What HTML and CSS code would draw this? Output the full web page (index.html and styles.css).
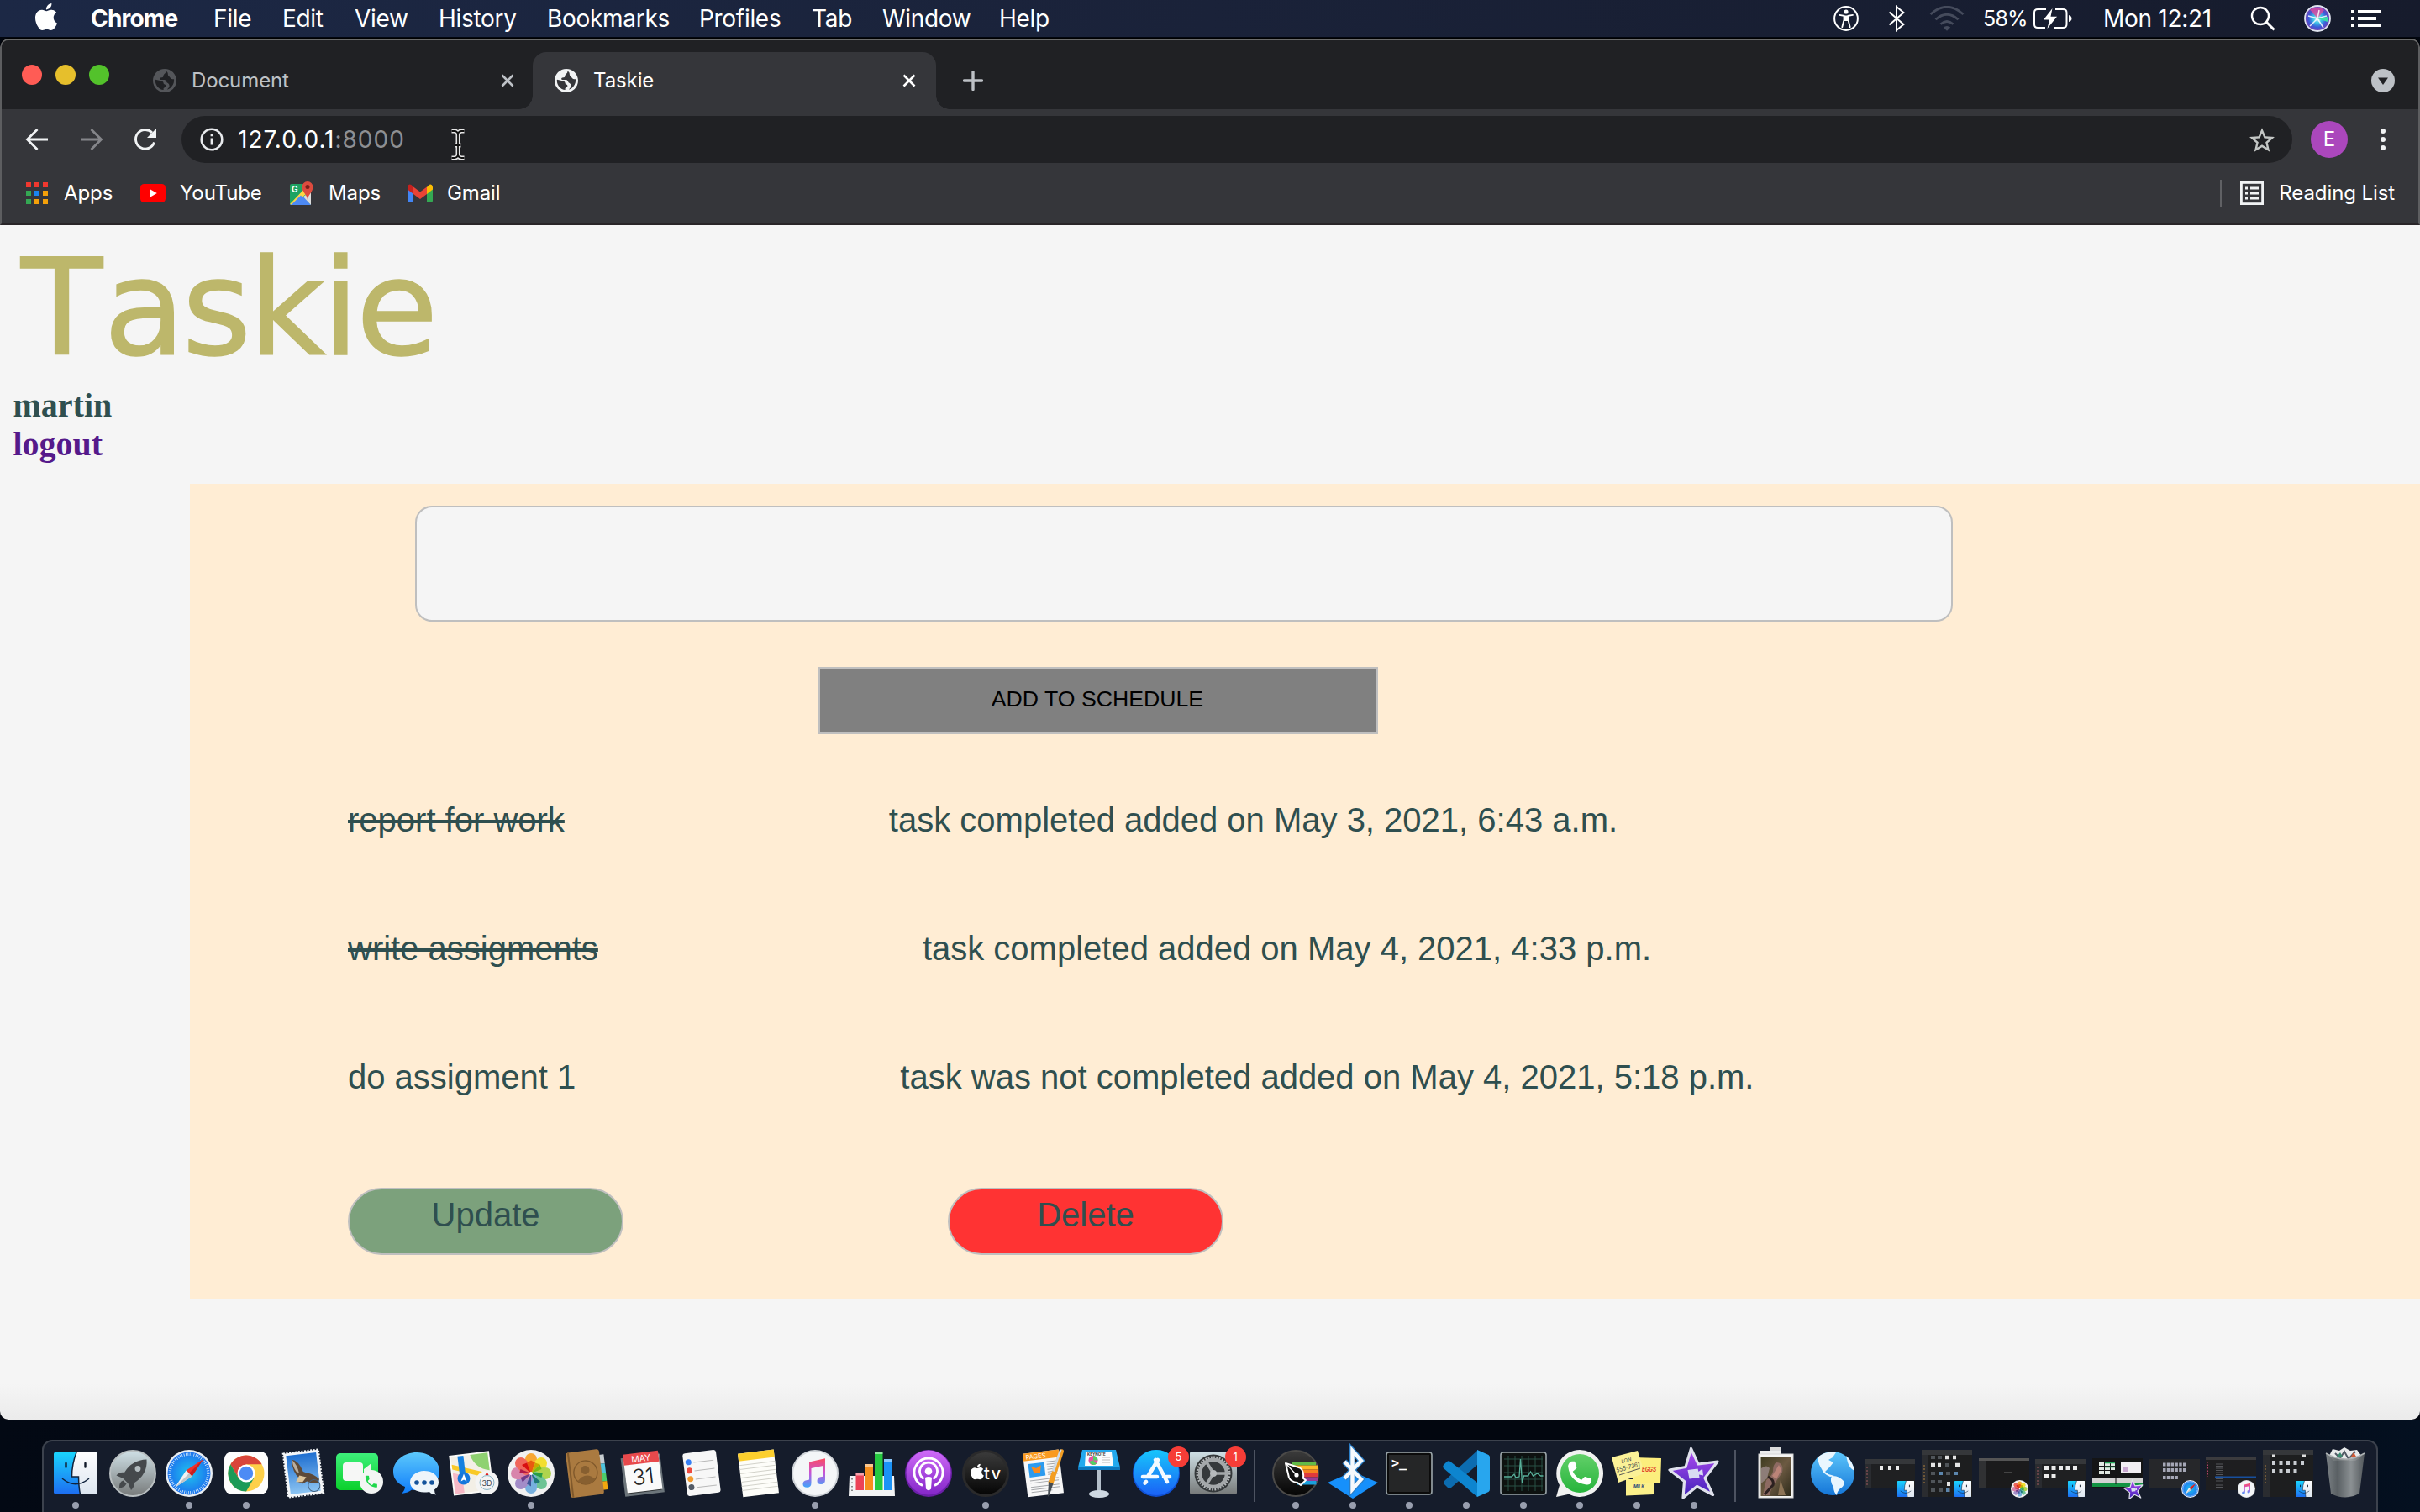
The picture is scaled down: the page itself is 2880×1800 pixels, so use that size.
FILE: index.html
```html
<!DOCTYPE html>
<html lang="en">
<head>
<meta charset="utf-8">
<title>Taskie</title>
<link rel="stylesheet" href="styles.css">
</head>
<body>
<svg class="defs" width="0" height="0" aria-hidden="true">
  <defs>
    <linearGradient id="gCyan" x1="0" y1="0" x2="0" y2="1"><stop offset="0" stop-color="#1ad4fd"/><stop offset="1" stop-color="#1d6ff2"/></linearGradient>
    <linearGradient id="gWhite" x1="0" y1="0" x2="0" y2="1"><stop offset="0" stop-color="#fdfdfe"/><stop offset="1" stop-color="#dde6f0"/></linearGradient>
    <linearGradient id="gSilver" x1="0" y1="0" x2="0" y2="1"><stop offset="0" stop-color="#cfe0e6"/><stop offset="1" stop-color="#777a7a"/></linearGradient>
    <radialGradient id="gSafari"><stop offset="0" stop-color="#1fc4ee"/><stop offset="1" stop-color="#1c72ee"/></radialGradient>
    <linearGradient id="gSky" x1="0" y1="0" x2="0" y2="1"><stop offset="0" stop-color="#1f6fd0"/><stop offset="1" stop-color="#8cc4f2"/></linearGradient>
    <linearGradient id="gGreen" x1="0" y1="0" x2="0" y2="1"><stop offset="0" stop-color="#3df07a"/><stop offset="1" stop-color="#0bd02b"/></linearGradient>
    <linearGradient id="gBlue" x1="0" y1="0" x2="0" y2="1"><stop offset="0" stop-color="#5cc8fb"/><stop offset="1" stop-color="#0f7dfb"/></linearGradient>
    <linearGradient id="gStore" x1="0" y1="0" x2="0" y2="1"><stop offset="0" stop-color="#17c6fb"/><stop offset="1" stop-color="#1a62f6"/></linearGradient>
    <linearGradient id="gPurple" x1="0" y1="0" x2="0" y2="1"><stop offset="0" stop-color="#cf6bf8"/><stop offset="1" stop-color="#8427c8"/></linearGradient>
    <linearGradient id="gStar" x1="0" y1="0" x2="0" y2="1"><stop offset="0" stop-color="#b14bf2"/><stop offset="1" stop-color="#3f22b8"/></linearGradient>
    <linearGradient id="gNote" x1="0" y1="0" x2="0" y2="1"><stop offset="0" stop-color="#fb4b62"/><stop offset=".5" stop-color="#c653d8"/><stop offset="1" stop-color="#3fa5fb"/></linearGradient>
    <linearGradient id="gBlack" x1="0" y1="0" x2="0" y2="1"><stop offset="0" stop-color="#3c3c3c"/><stop offset="1" stop-color="#040404"/></linearGradient>
    <linearGradient id="gWa" x1="0" y1="0" x2="0" y2="1"><stop offset="0" stop-color="#62d069"/><stop offset="1" stop-color="#27b43c"/></linearGradient>
    <linearGradient id="gTrash" x1="0" y1="0" x2="1" y2="0"><stop offset="0" stop-color="#83898c"/><stop offset=".3" stop-color="#5f6568"/><stop offset=".65" stop-color="#94999b"/><stop offset="1" stop-color="#585d60"/></linearGradient>
    <linearGradient id="gEarth" x1="0" y1="0" x2="0" y2="1"><stop offset="0" stop-color="#5cc6fb"/><stop offset="1" stop-color="#1576d8"/></linearGradient>
    <linearGradient id="gPhoto" x1="0" y1="0" x2="1" y2="1"><stop offset="0" stop-color="#3e3b20"/><stop offset=".5" stop-color="#6c5a42"/><stop offset="1" stop-color="#2d2a1a"/></linearGradient>
    <radialGradient id="gSiri"><stop offset="0" stop-color="#e8ffff"/><stop offset=".35" stop-color="#3cc3e6"/><stop offset=".7" stop-color="#3c5ad8"/><stop offset="1" stop-color="#7a3fb0"/></radialGradient>
  </defs>

  <symbol id="apple" viewBox="0 0 24 24"><path d="M12.152 6.896c-.948 0-2.415-1.078-3.96-1.04-2.04.027-3.91 1.183-4.961 3.014-2.117 3.675-.546 9.103 1.519 12.09 1.013 1.454 2.208 3.09 3.792 3.039 1.52-.065 2.09-.987 3.935-.987 1.831 0 2.35.987 3.96.948 1.637-.026 2.676-1.48 3.676-2.948 1.156-1.688 1.636-3.325 1.662-3.415-.039-.013-3.182-1.221-3.22-4.857-.026-3.04 2.48-4.494 2.597-4.559-1.429-2.09-3.623-2.324-4.39-2.376-2-.156-3.675 1.09-4.61 1.09zM15.53 3.83c.843-1.012 1.4-2.427 1.245-3.83-1.207.052-2.662.805-3.532 1.818-.78.896-1.454 2.338-1.273 3.714 1.338.104 2.715-.688 3.559-1.701"/></symbol>

  <symbol id="globe" viewBox="2 2 20 20"><path d="M12 2C6.480 2 2 6.480 2 12s4.480 10 10 10 10-4.480 10-10S17.520 2 12 2zm-1 17.930c-3.950-.49-7-3.850-7-7.930 0-.3 0-.6.1-.9L8 12c1.500 0 3 .6 3 2.200 0 1.300 2 .8 2 2.300 0 1.200-1.300 1.200-2 2v1.400zm7.200-3.200c-1 1.500-2.500 2.600-4 3 .2-1 1.800-1.500 1.800-3 0-1.200-.5-2.200-1.500-2.700-1.300-.6-1.200-2.700-2.700-2.700H8.500c-.8 0-1-1.800 0-1.800 1.700 0 2.500-.6 2.500-1.800 0-1.500 2-1.300 2-3.500 2.600.4 1 3 2.500 4 1.300.8 1.500 2.400 3 2.600h1.400c.2 2.300-.4 4.500-1.700 5.900z"/></symbol>
  <symbol id="close" viewBox="0 0 16 16"><path d="M1.500 1.500l13 13m0-13l-13 13" fill="none" stroke="currentColor" stroke-width="2.600"/></symbol>

  <symbol id="finder" viewBox="0 0 52 49"><rect width="52" height="49" rx="1.500" fill="url(#gCyan)"/><path d="M27 0h23.500q1.500 0 1.500 1.500v46q0 1.500-1.500 1.500H31.500q-1.700-8-1.800-20H21.500Q21.500 14 27 0z" fill="url(#gWhite)"/><path d="M14.500 13v4.500m23-4.500v4.500" stroke="#111a2a" stroke-width="2.400" stroke-linecap="round"/><path d="M10.500 31.500q15.500 12.500 31 0M27 0q-5.500 14-5.500 29h8q.2 12 1.800 20" fill="none" stroke="#10233c" stroke-width="1.500" stroke-linecap="round"/></symbol>

  <symbol id="photos" viewBox="0 0 56 56"><circle cx="28" cy="28" r="28" fill="#f1f1f1"/>
    <g opacity=".9"><rect x="21" y="4" width="14" height="24" rx="7" fill="#f9a01e"/>
    <rect x="21" y="4" width="14" height="24" rx="7" fill="#f4dd1c" transform="rotate(45 28 28)"/>
    <rect x="21" y="4" width="14" height="24" rx="7" fill="#a8d13c" transform="rotate(90 28 28)"/>
    <rect x="21" y="4" width="14" height="24" rx="7" fill="#5fbf8b" transform="rotate(135 28 28)"/>
    <rect x="21" y="4" width="14" height="24" rx="7" fill="#6aa9dc" transform="rotate(180 28 28)"/>
    <rect x="21" y="4" width="14" height="24" rx="7" fill="#9b83c4" transform="rotate(225 28 28)"/>
    <rect x="21" y="4" width="14" height="24" rx="7" fill="#d67aa4" transform="rotate(270 28 28)"/>
    <rect x="21" y="4" width="14" height="24" rx="7" fill="#f0574a" transform="rotate(315 28 28)"/></g>
    <path d="M28 28l-5-12.500 5-3 5 3z" fill="#e85a10"/><path d="M28 28l5-12.500 5.500 2z" fill="#c8a800"/><path d="M28 28l12.500-5-2-5.500z" fill="#7eb812"/><path d="M28 28l12.500 5 1.500-6z" fill="#2a9d45"/><path d="M28 28l5 12.500 6-2.500z" fill="#207a78"/><path d="M28 28l-5 12.500 5 3z" fill="#3f5597"/><path d="M28 28l-12.500 5 2.500 5.500z" fill="#6d3a88"/><path d="M28 28l-12.500-5-1.500 5z" fill="#b01a48"/><path d="M28 28l-5-12.500-6 2.500z" fill="#d80f10"/><circle cx="28" cy="28" r="2" fill="#fff"/></symbol>

  <symbol id="safari" viewBox="0 0 56 56"><circle cx="28" cy="28" r="28" fill="#e9eef2"/><circle cx="28" cy="28" r="25.500" fill="url(#gSafari)"/><circle cx="28" cy="28" r="22.800" fill="none" stroke="#d4ecfb" stroke-width="3.400" stroke-dasharray=".8 1.590"/><path d="M45 11L24.500 24.500l7 7z" fill="#f0302b"/><path d="M11 45L31.500 31.500l-7-7z" fill="#f2f2f2"/><path d="M45 11L28 28l3.500 3.500z" fill="#c5201f"/><path d="M11 45L28 28l3.500 3.500z" fill="#bfc4c8"/></symbol>

  <symbol id="music" viewBox="0 0 56 56"><circle cx="28" cy="28" r="28" fill="#cfd3d8"/><circle cx="28" cy="28" r="26" fill="#f4f6f8"/><path d="M21 14.500l19-4.200v25.200q0 5.500-5 5.500-4.500 0-4.500-4 0-4 4-4.700l3-.6V19L23.500 22v17.500q0 5.300-5.200 5.300-4.800-.2-4.800-4 0-4 4.200-4.600l3.300-.6z" fill="url(#gNote)"/></symbol>

  <symbol id="imovie" viewBox="0 0 62 62"><path d="M27.500 2l8.500 18.500 23-3-15 19.500 9.500 20-19-10L18 60.500 19.500 41 2 27.500l19-3.500z" fill="url(#gStar)" stroke="#dfe1ec" stroke-width="3.200" stroke-linejoin="round"/><path d="M23.500 27.500l12-1.500 1 3.500 4.500-3.500 1 8-5-1 .5 3.500-12 1.500z" fill="#d9dcf2"/></symbol>
</svg>

<header class="menubar">
  <svg class="apple" width="32" height="32"><use href="#apple"/></svg>
  <nav class="menus"><b>Chrome</b><span>File</span><span>Edit</span><span>View</span><span>History</span><span>Bookmarks</span><span>Profiles</span><span>Tab</span><span>Window</span><span>Help</span></nav>
  <div class="status">
    <svg class="s-acc" width="30" height="30" viewBox="0 0 30 30"><circle cx="15" cy="15" r="13.900" fill="none" stroke="#fff" stroke-width="2"/><circle cx="15" cy="7" r="2.600" fill="#fff"/><path d="M7 10.800l5.500 1v5l-2.200 8.400M23 10.800l-5.500 1v5l2.200 8.400" fill="none" stroke="#fff" stroke-width="1.800" stroke-linecap="round"/><path d="M12 11.500h6v6.500h-6z" fill="#fff"/></svg>
    <svg class="s-bt" width="20" height="32" viewBox="0 0 20 32"><path d="M1.500 8.500l17 14.500L10 30V2l8.500 7L1.500 23.500" fill="none" stroke="#fff" stroke-width="2"/></svg>
    <svg class="s-wifi" width="42" height="30" viewBox="0 0 42 30"><g fill="none" stroke="#454b5c" stroke-width="2.800"><path d="M1.500 10Q21-7.500 40.500 10M7.500 16.200q13.500-12 27 0M13.500 21.800q7.500-6.500 15 0"/></g><path d="M16.800 25.500q4.200-3 8.400 0L21 29.800z" fill="#454b5c"/></svg>
    <span class="s-pct">58%</span>
    <svg class="s-bat" width="46" height="26" viewBox="0 0 46 26"><path d="M15 2H5Q1 2 1 6v14q0 4 4 4h9M26 2h9q4.500 0 4.500 4v14q0 4-4.500 4H24" fill="none" stroke="#fff" stroke-width="2"/><path d="M42 9q3.500 1 3.500 4T42 17z" fill="#fff"/><path d="M22.500 1L12 14.500h7L16.500 25 28 10.800h-7.500z" fill="#fff"/></svg>
    <span class="s-time">Mon 12:21</span>
    <svg class="s-search" width="30" height="30" viewBox="0 0 30 30"><circle cx="12" cy="12" r="10" fill="none" stroke="#fff" stroke-width="2.400"/><path d="M19 19l9.500 9.500" stroke="#fff" stroke-width="3"/></svg>
    <svg class="s-siri" width="32" height="32" viewBox="0 0 32 32"><circle cx="16" cy="16" r="15" fill="url(#gSiri)" stroke="#dfe3ee" stroke-width="1.800"/><path d="M16 16L7 5.500Q16-.5 24 6z" fill="#e4489c" opacity=".8"/><path d="M16 16l11-3M16 16l7 11M16 16l-9 9M16 16L5 13M16 16l2-10" stroke="#fff" stroke-width="1.500" opacity=".85"/><path d="M16 16l12-2v6z" fill="#38e0a8"/></svg>
    <svg class="s-list" width="36" height="20" viewBox="0 0 36 20"><path d="M0 2h4m-4 8h4m-4 8h4M8 2h28M8 10h22M8 18h28" stroke="#fff" stroke-width="4"/></svg>
  </div>
</header>

<main class="window">
  <section class="chrome">
    <div class="tabstrip">
      <div class="lights"><i class="red"></i><i class="yellow"></i><i class="green"></i></div>
      <div class="tab"><svg width="28" height="28"><use href="#globe"/></svg><span>Document</span><svg class="x" width="16" height="16"><use href="#close"/></svg></div>
      <div class="tab active"><svg width="28" height="28"><use href="#globe"/></svg><span>Taskie</span><svg class="x" width="16" height="16"><use href="#close"/></svg></div>
      <svg class="plus" width="24" height="24" viewBox="0 0 24 24"><path d="M12 1.500v21M1.500 12h21" stroke="#bdc1c6" stroke-width="3.400" stroke-linecap="round"/></svg>
      <svg class="tabmenu" width="28" height="28" viewBox="0 0 28 28"><circle cx="14" cy="14" r="14" fill="#bdc1c6"/><path d="M8 10.500h12l-6 8.500z" fill="#202124"/></svg>
    </div>
    <div class="toolbar">
      <svg width="28" height="28" viewBox="0 0 28 28"><path d="M27 14H3M14.500 2L2.500 14l12 12" fill="none" stroke="#f1f3f4" stroke-width="2.800"/></svg>
      <svg class="fwd" width="28" height="28" viewBox="0 0 28 28"><path d="M1 14h24M13.500 2l12 12-12 12" fill="none" stroke="#85868a" stroke-width="2.800"/></svg>
      <svg class="reload" width="28" height="28" viewBox="0 0 28 28"><path d="M24.500 17.500A11.300 11.300 0 1 1 22 6" fill="none" stroke="#f1f3f4" stroke-width="2.900"/><path d="M27 1v11H16z" fill="#f1f3f4"/></svg>
      <div class="omnibox">
        <svg width="28" height="28" viewBox="0 0 28 28"><circle cx="14" cy="14" r="12.300" fill="none" stroke="#e8eaed" stroke-width="2.600"/><path d="M14 12.500V20.500M14 7.500v2.800" stroke="#e8eaed" stroke-width="2.800"/></svg>
        <span class="url">127.0.0.1<i>:8000</i></span>
        <svg class="ibeam" width="20" height="38" viewBox="0 0 20 38"><g fill="none" stroke-linejoin="round"><path d="M2.500 3h3q4.500 0 4.500 5v22q0 5-4.500 5h-3M17.500 3h-3Q10 3 10 8v22q0 5 4.500 5h3M6.500 20h7" stroke="#e6e6e6" stroke-width="5"/><path d="M2.500 3h3q4.500 0 4.500 5v22q0 5-4.500 5h-3M17.500 3h-3Q10 3 10 8v22q0 5 4.500 5h3M6.500 20h7" stroke="#111" stroke-width="1.800"/></g></svg>
        <svg class="star" width="30" height="29" viewBox="2 2 20 19"><path d="M22 9.240l-7.190-.62L12 2 9.190 8.630 2 9.240l5.460 4.730L5.820 21 12 17.270 18.180 21l-1.630-7.030L22 9.240zM12 15.400l-3.760 2.270 1-4.280-3.320-2.880 4.380-.38L12 6.100l1.710 4.040 4.380.38-3.320 2.880 1 4.280L12 15.400z" fill="#c4c7c5"/></svg>
      </div>
      <span class="avatar">E</span>
      <svg class="dots" width="8" height="28" viewBox="0 0 8 28"><g fill="#f1f3f4"><circle cx="4" cy="4" r="3"/><circle cx="4" cy="14" r="3"/><circle cx="4" cy="24" r="3"/></g></svg>
    </div>
    <div class="bookmarks">
      <svg width="26" height="26" viewBox="0 0 26 26"><path d="M0 0h6v6H0zM10 0h6v6h-6zM20 0h6v6h-6z" fill="#f0382f"/><path d="M0 10h6v6H0zM0 20h6v6H0z" fill="#34a853"/><path d="M10 10h6v6h-6z" fill="#1a84f0"/><path d="M20 10h6v6h-6zM10 20h6v6h-6zM20 20h6v6h-6z" fill="#f4a10a"/></svg><span class="b1">Apps</span>
      <svg width="30" height="22" viewBox="0 0 30 22"><rect width="30" height="22" rx="4.500" fill="#f00"/><path d="M12 6.500v9l7.800-4.500z" fill="#fff"/></svg><span class="b2">YouTube</span>
      <svg width="30" height="30" viewBox="0 0 30 30"><rect x="1" y="4" width="25" height="25" rx="2" fill="#1da362"/><path d="M1 29L14 15l12 14z" fill="#4d8af4"/><path d="M26 29V13l-9 6-2.500-2.500z" fill="#dcdcdc"/><path d="M1 28L20 8l4 5L4 29z" fill="#fdd644"/><path d="M2.500 29L14 17.500 24 29z" fill="#4d8af4"/><path d="M22 23c0-6-6.500-9-6.500-15.500a6.500 6.500 0 0 1 13 0C28.500 14 22 17 22 23z" fill="#dc4b3e"/><circle cx="22" cy="7.500" r="2.500" fill="#7c1f1a"/><text x="3" y="14" font-size="10" font-weight="700" fill="#fff">G</text></svg><span class="b3">Maps</span>
      <svg width="30" height="22" viewBox="0 0 30 22"><path d="M0 4v16q0 2 2 2h5V9z" fill="#4285f4"/><path d="M30 4v16q0 2-2 2h-5V9z" fill="#34a853"/><path d="M0 3.500v3L7 12V4L4.500 1Q1-1 0 3.500z" fill="#c5221f"/><path d="M30 3.500v3L23 12V4l2.500-3Q29-1 30 3.500z" fill="#fbbc04"/><path d="M7 3.500l8 6 8-6V12l-8 6-8-6z" fill="#ea4335"/></svg><span class="b4">Gmail</span>
      <div class="reading"><svg width="28" height="28" viewBox="0 0 28 28"><rect x="1.400" y="1.400" width="25.200" height="25.200" fill="none" stroke="#f1f3f4" stroke-width="2.800"/><path d="M6 8h3m-3 6h3m-3 6h3M12 8h10m-10 6h10m-10 6h10" stroke="#f1f3f4" stroke-width="2.800"/></svg><span>Reading List</span></div>
    </div>
  </section>

  <section class="page">
    <h1>Taskie</h1>
    <div class="user">martin</div>
    <div class="user"><a class="logout">logout</a></div>
    <div class="panel">
      <input class="entry" type="text" aria-label="Task">
      <button class="add">ADD TO SCHEDULE</button>
      <div class="tasks">
        <div class="task"><s>report for work</s><span>task completed added on May 3, 2021, 6:43 a.m.</span></div>
        <div class="task"><s>write assigments</s><span>task completed added on May 4, 2021, 4:33 p.m.</span></div>
        <div class="task"><span>do assigment 1</span><span>task was not completed added on May 4, 2021, 5:18 p.m.</span></div>
      </div>
      <div class="actions"><a class="pill update">Update</a><a class="pill delete">Delete</a></div>
    </div>
  </section>
</main>

<footer class="desktop">
  <div class="dock">
    <div class="app run"><svg viewBox="0 0 64 64"><use href="#finder" x="6" y="7" width="52" height="49"/></svg></div>
    <div class="app"><svg viewBox="0 0 64 64"><circle cx="32" cy="32" r="27" fill="url(#gSilver)" stroke="#b9bfc1" stroke-width="2"/><path d="M48.500 15.500Q50 33 33.500 43.500q.5 5-3.500 8.500l-3.500-8-6-6-8-3.500q4-4.500 9.500-3.500Q31 16 48.500 15.500z" fill="#45494c"/><circle cx="38" cy="26.500" r="3.400" fill="#b4bdc0"/><path d="M20.500 40.500q-5 2-4.500 9 6-.5 8.500-5z" fill="#45494c"/></svg></div>
    <div class="app run"><svg viewBox="0 0 64 64"><use href="#safari" x="4" y="4" width="56" height="56"/></svg></div>
    <div class="app run"><svg viewBox="0 0 64 64"><rect x="6" y="6" width="52" height="51" rx="9" fill="#fdfdfd"/><circle cx="32" cy="32" r="21.500" fill="#fdd04a"/><path d="M13.380 21.250A21.500 21.500 0 0 1 50.600 21.250H32L22.700 37.400z" fill="#d9453a"/><path d="M13.380 21.250A21.500 21.500 0 0 0 32 53.500l9.300-16.100L22.700 37.400z" fill="#1d9a57"/><circle cx="32" cy="32" r="10.500" fill="#fff"/><circle cx="32" cy="32" r="8.200" fill="#4c8bf5"/></svg></div>
    <div class="app"><svg viewBox="0 0 64 64"><g transform="rotate(-7 32 32)"><rect x="11" y="6" width="42" height="52" fill="#f4f6f8" stroke="#f4f6f8" stroke-width="2.400" stroke-dasharray="2 1.600"/><rect x="14" y="9" width="36" height="46" fill="url(#gSky)"/><path d="M20 14q8 2 12 16l4 2q8 2 14 9l-2 4q-8 1-13-3l-5 2-6-3 3-3q-8-8-7-24z" fill="#5e4a38"/><path d="M21 15q5 6 6 16l-3-2q-4-7-3-14z" fill="#b9aea0"/><path d="M27 34l8 3-5 5-8-1z" fill="#dcc49a"/><circle cx="43" cy="48" r="7" fill="none" stroke="#44617e" stroke-width="1"/></g></svg></div>
    <div class="app"><svg viewBox="0 0 64 64"><rect x="4" y="8" width="50" height="44" rx="5" fill="url(#gGreen)"/><rect x="12" y="19" width="24" height="22" rx="4" fill="#f6f7f6"/><path d="M37 27l9-7v20l-9-6z" fill="#eef5ee"/><circle cx="46" cy="42" r="14" fill="#f3f5f4"/><path transform="translate(36.500 32.500) scale(.78)" d="M6.620 10.790c1.440 2.830 3.760 5.140 6.590 6.590l2.200-2.200c.27-.27.67-.36 1.020-.24 1.120.37 2.330.57 3.570.57.55 0 1 .45 1 1V20c0 .55-.45 1-1 1-9.390 0-17-7.610-17-17 0-.55.45-1 1-1h3.500c.55 0 1 .45 1 1 0 1.250.2 2.450.57 3.570.11.35.03.74-.25 1.020z" fill="#1fd84c"/></svg></div>
    <div class="app"><svg viewBox="0 0 64 64"><path d="M32 7c15 0 27 10 27 23S47 52 32 52q-4 0-6-.5-4 3.500-12 4.500 4-4 4-8Q4 42 4 30C4 17 17 7 32 7z" fill="url(#gBlue)"/><path d="M41 29c10 0 17 6 17 13.500 0 4-2 7-5 9q0 4 2 6-6-1-8-3.500-3 .6-6 .6c-10 0-17-5-17-12S31 29 41 29z" fill="#eef5fa"/><g fill="#14539c"><circle cx="32" cy="43" r="2.800"/><circle cx="41" cy="43" r="2.800"/><circle cx="50" cy="43" r="2.800"/></g></svg></div>
    <div class="app"><svg viewBox="0 0 64 64"><g transform="rotate(-7 28 32)"><rect x="6" y="9" width="46" height="46" fill="#f3efe6" stroke="#fbfbf8" stroke-width="2"/><path d="M30 10h21v21Q34 27 30 10z" fill="#8fd271"/><path d="M7 19l44 16v6L7 25z" fill="#f9c927"/><path d="M7 29l11 4v21H7z" fill="#f7b9c6"/><path d="M15 10h7v24h-7z" fill="#1580e0"/></g><circle cx="20" cy="38" r="7.500" fill="#1478dc"/><path d="M20 32.500l3.500 9-3.500-2-3.500 2z" fill="#fff"/><circle cx="47.500" cy="43" r="14" fill="#f4f4f4"/><circle cx="47.500" cy="43" r="8.500" fill="none" stroke="#86b3c4" stroke-width="1"/><path d="M47.500 30l2 4h-4z" fill="#e02020"/><text x="47.500" y="46.500" font-size="9" text-anchor="middle" fill="#444">3D</text></svg></div>
    <div class="app run"><svg viewBox="0 0 64 64"><use href="#photos" x="4" y="4" width="56" height="56"/></svg></div>
    <div class="app"><svg viewBox="0 0 64 64"><g transform="rotate(-7 30 32)"><rect x="48" y="12" width="6" height="11" fill="#c6ccd0"/><rect x="48" y="23" width="6" height="11" fill="#4ec3dc"/><rect x="48" y="34" width="6" height="10" fill="#4ecb68"/><rect x="48" y="44" width="6" height="10" fill="#f3a70e"/><rect x="9" y="5" width="40" height="54" rx="3" fill="#aa7a40"/><path d="M12 5v54" stroke="#80592b" stroke-width="2"/><circle cx="30" cy="31" r="14" fill="none" stroke="#80592b" stroke-width="1.400"/><circle cx="30" cy="28" r="5" fill="#875f30"/><path d="M19.500 40q10.500-11 21 0-10 10-21 0z" fill="#875f30"/></g></svg></div>
    <div class="app"><svg viewBox="0 0 64 64"><g transform="rotate(-7 31 32)"><rect x="6" y="11" width="47" height="46" fill="#6c757b"/><rect x="9" y="12" width="41" height="42" fill="#2e3234"/><rect x="9" y="8" width="42" height="45" fill="#fafafa"/><rect x="9" y="7" width="42" height="13" fill="#e8494c"/><text x="30" y="17.500" font-size="10.500" text-anchor="middle" fill="#fff">MAY</text><text x="30" y="45" font-size="26" font-weight="300" text-anchor="middle" fill="#222" textLength="26">31</text></g></svg></div>
    <div class="app"><svg viewBox="0 0 64 64"><g transform="rotate(-7 32 32)"><rect x="12" y="6" width="40" height="51" rx="3" fill="#f7f7f7"/><g stroke="#b9b9b9" stroke-width="1"><path d="M24 18h24M24 28h24M24 38h24M24 48h24"/></g><circle cx="18" cy="17" r="3.500" fill="#3880f5"/><circle cx="18" cy="27" r="3.500" fill="#ee4a3e"/><circle cx="18" cy="37" r="3.500" fill="#f29b2e"/><circle cx="18" cy="47" r="3.500" fill="#535b66"/></g></svg></div>
    <div class="app"><svg viewBox="0 0 64 64"><g transform="rotate(-7 32 32)"><rect x="11" y="6" width="43" height="52" fill="#fdfdf9"/><rect x="11" y="6" width="43" height="9" fill="#fccf2d"/><path d="M11 20h43M11 25h43M11 30h43M11 35h43M11 40h43M11 45h43M11 50h43" stroke="#d2d2ca" stroke-width="1"/></g></svg></div>
    <div class="app run"><svg viewBox="0 0 64 64"><use href="#music" x="4" y="4" width="56" height="56"/></svg></div>
    <div class="app"><svg viewBox="0 0 64 64"><path d="M5 35h53l1 24H4z" fill="#f2f3f4"/><path d="M8 38v17" stroke="#888" stroke-width="2" stroke-dasharray="1.500 3"/><rect x="12.500" y="32" width="9.500" height="20" fill="#ec4257"/><rect x="23.500" y="21" width="9.500" height="31" fill="#f78f1e"/><rect x="35" y="6" width="9.500" height="46" fill="#25c940"/><rect x="46" y="15" width="9.500" height="37" fill="#1b93f6"/><path d="M12.500 33h9.500M23.500 22.500h9.500M35 7.500h9.500M46 16.500h9.500" stroke="#ffffff80" stroke-width="3"/></svg></div>
    <div class="app"><svg viewBox="0 0 64 64"><circle cx="32" cy="32" r="28" fill="#6b1fa8"/><circle cx="32" cy="31" r="26.500" fill="url(#gPurple)"/><g fill="none" stroke="#fff" stroke-width="2.800"><path d="M25 46.500a17 17 0 1 1 14 0M26.500 38.500a10.500 10.500 0 1 1 11 0"/></g><circle cx="32" cy="29.500" r="4.300" fill="#fff"/><path d="M28 37q4-2 8 0l-1 13.500q-3 3.500-6 0z" fill="#fff"/></svg></div>
    <div class="app run"><svg viewBox="0 0 64 64"><circle cx="32" cy="32" r="26.500" fill="url(#gBlack)" stroke="#2a2a2b" stroke-width="3"/><svg x="12.500" y="20.500" width="19" height="19" fill="#fff"><use href="#apple"/></svg><text x="30" y="38.500" font-size="20" font-weight="500" fill="#fff" textLength="20">tv</text></svg></div>
    <div class="app"><svg viewBox="0 0 64 64"><g transform="rotate(-7 32 32)"><rect x="11" y="6" width="43" height="52" fill="#f7f7f7"/><rect x="11" y="6" width="43" height="9" fill="#f99a20"/><text x="14" y="13.500" font-size="7.500" fill="#fff">PAGES</text><rect x="16" y="19" width="19" height="16" fill="#2b9bef"/><path d="M19 22l6 3 6-3-2 9h-7z" fill="#f98a1b"/><path d="M38 19h12M38 22h12M38 25h12M38 28h12M38 31h12M38 34h12M16 39h34M16 42h34M16 47h34M16 50h34M16 53h25" stroke="#a5a7aa" stroke-width="1"/></g><path d="M52 4q5-2 5 2L44 46l-6-2z" fill="#f39e23"/><path d="M52 4q2-1 2.500 0L46 30l-3.500-1z" fill="#cfdae6"/><path d="M39 42l5.500 2-4 12-2.500 4z" fill="#444b52"/></svg></div>
    <div class="app"><svg viewBox="0 0 64 64"><path d="M12 4h40l5 21H7z" fill="#23a9ee"/><path d="M7 25h50v3H7z" fill="#0d77bd"/><path d="M16 7h31l2 16H15z" fill="#fbfcfd"/><text x="18" y="11" font-size="4.500" font-weight="700" fill="#333">KEYNOTE</text><circle cx="25" cy="16.500" r="5.500" fill="#e84ea4"/><path d="M25 16.500v-5.500a5.500 5.500 0 0 1 5.500 5.500zM20 18l5-1.500 4 4q-5 4-9-2.500z" fill="#55cf66"/><path d="M36 13h9m-9 3h9m-9 3h9" stroke="#bbb"/><path d="M30 28h4v28h-4z" fill="#b4bfca"/><ellipse cx="32" cy="56.500" rx="12" ry="4.500" fill="#ced8e2"/></svg></div>
    <div class="app"><svg viewBox="0 0 64 64"><circle cx="32" cy="32" r="28" fill="#0f50d4"/><circle cx="32" cy="31" r="27" fill="url(#gStore)"/><g stroke="#f4faff" stroke-width="4.600" stroke-linecap="round"><path d="M34 16L22.500 35M31 16l14 26M16 36h17M41 36h7M20 42l-1.500 1.500"/></g></svg><b class="badge">5</b></div>
    <div class="app"><svg viewBox="0 0 64 64"><rect x="4" y="6" width="56" height="51" rx="2" fill="url(#gSilver)"/><circle cx="32" cy="32" r="22.500" fill="#35393b"/><circle cx="32" cy="32" r="19" fill="none" stroke="#b7bbbd" stroke-width="3" stroke-dasharray="1.800 1.500"/><circle cx="32" cy="32" r="16" fill="none" stroke="#a4a8aa" stroke-width="4.500"/><path d="M32 32h15M32 32l-8-13M32 32l-8 13" stroke="#a4a8aa" stroke-width="3.500"/><circle cx="32" cy="32" r="4" fill="#b6babc"/></svg><b class="badge">1</b></div>
    <i class="divider"></i>
    <div class="app run"><svg viewBox="0 0 64 64"><circle cx="32" cy="32" r="27" fill="url(#gBlack)" stroke="#4b4a48" stroke-width="2"/><path d="M27 18.500h29v4H27z" fill="#62bb47"/><path d="M27 22.500h31v5H27z" fill="#fcb827"/><path d="M30 27.500h28v4.500H30z" fill="#f6821f"/><path d="M30 32h28v4.500H30z" fill="#e03a3c"/><path d="M30 36.500h28v4.500H30z" fill="#963d97"/><path d="M34 41h22.500v4.500H34z" fill="#1a9fdd"/><path d="M20 20l17 5.500q5 3 4 12.500l3 2-6 6-4-3q-8-1-10-6z" fill="#111" stroke="#fff" stroke-width="2" stroke-linejoin="round"/><circle cx="33" cy="34" r="2.600" fill="#fff"/><path d="M20 20l12 13" stroke="#fff" stroke-width="1.300"/></svg></div>
    <div class="app run"><svg viewBox="0 0 64 64"><path d="M2 43l30-13 30 13-30 19z" fill="#1690fb"/><path d="M30 50l14-8-4-3z" fill="#0a62bd"/><path d="M22 18l20 21-10.500 12V5L42 17 22 38" fill="none" stroke="#2b7fc8" stroke-width="7"/><path d="M22 18l20 21-10.500 12V5L42 17 22 38" fill="none" stroke="#f6f9fc" stroke-width="4.400"/></svg></div>
    <div class="app run"><svg viewBox="0 0 64 64"><rect x="5" y="7" width="54" height="50" rx="3" fill="#252627" stroke="#99a4a8" stroke-width="1.600"/><rect x="7" y="9" width="50" height="46" rx="1" fill="#252627" stroke="#0b0b0b" stroke-width="2"/><text class="mono" x="11" y="25" font-size="15" font-weight="700" fill="#fff">&gt;_</text></svg></div>
    <div class="app run"><svg viewBox="0 0 64 64"><path d="M46 4v17L14 49q-2 1.500-4 0l-4-4q-1.500-2 0-4z" fill="#0c6cb0"/><path d="M45 60V43L13 18q-2-1.500-4 0l-4 4q-1.500 2 0 4z" fill="#0d85cf"/><path d="M45 4l13.500 6q1.500 1 1.500 3v38q0 2-1.500 3L45 60z" fill="#28a6ee"/></svg></div>
    <div class="app run"><svg viewBox="0 0 64 64"><rect x="5" y="7" width="54" height="50" rx="3" fill="#0d1110" stroke="#99a4a8" stroke-width="1.600"/><path d="M14 11v42M22 11v42M30 11v42M38 11v42M46 11v42M54 11v42M9 15h46M9 23h46M9 31h46M9 39h46M9 47h46" stroke="#295044" stroke-width="1"/><path d="M9 36h9l3-3 2 4 4-1 1.500-21 2 28 2-8h5l3-5 3 5 5-3 4 3h3" fill="none" stroke="#58b09a" stroke-width="1.300"/></svg></div>
    <div class="app run"><svg viewBox="0 0 64 64"><path d="M32 4a28 28 0 1 1-13 52.800L4 60l4-14A28 28 0 0 1 32 4z" fill="#f1f2f1"/><circle cx="32" cy="32" r="23" fill="url(#gWa)"/><path transform="translate(13.500 13) scale(1.550)" d="M6.620 10.790c1.440 2.830 3.760 5.140 6.590 6.590l2.200-2.200c.27-.27.67-.36 1.020-.24 1.120.37 2.330.57 3.570.57.55 0 1 .45 1 1V18c0 1.800-1.450 3-4 3C9 20 4 15 3 7c0-2 1.450-4 3-4h1.500c.55 0 1 .45 1 1 .4 1.250.7 2.450 1.070 3.570.11.35.03.74-.25 1.020z" fill="#fff"/></svg></div>
    <div class="app run"><svg viewBox="0 0 64 64"><path d="M19 39h33v18l-33 1.500z" fill="#fbf08a"/><path d="M27 13l34 1-1 30-33-1z" fill="#fcee7d"/><path d="M2 13l31-8 8 27-31 11z" fill="#fbf197"/><g class="hand"><text x="14" y="20" font-size="6" fill="#444" transform="rotate(-15 14 20)">LON</text><text x="8" y="31" font-size="7.500" fill="#444" transform="rotate(-15 8 31)" textLength="29" lengthAdjust="spacingAndGlyphs">555-7361</text><text x="38" y="30" font-size="7.500" font-weight="700" fill="#e0482c" textLength="17" lengthAdjust="spacingAndGlyphs">EGGS</text><text x="28" y="50" font-size="6" font-weight="700" fill="#2f4f78" textLength="13" lengthAdjust="spacingAndGlyphs">MILK</text></g><path d="M11 34l25-8" stroke="#555"/></svg></div>
    <div class="app run"><svg viewBox="0 0 64 64"><use href="#imovie" x="1" y="0" width="62" height="63"/></svg></div>
    <i class="divider"></i>
    <div class="app"><svg viewBox="0 0 64 64"><path d="M25 1h13v12H25z" fill="#d9dadb"/><path d="M13 5h24v8H13z" fill="#eceded"/><rect x="11" y="9" width="41" height="52" fill="#f5f5f4" stroke="#d8d8d8"/><rect x="13.500" y="12" width="36" height="47" fill="url(#gPhoto)"/><path d="M14 26q7-5 10 0l-3 12-7 6z" fill="#8d7d78"/><path d="M32 19q9 0 7 12l-7 10q-6 7-8 17h-8l4-18q6-4 8-10 0-9 4-11z" fill="#8d6a62"/><path d="M35 22l-8 13 5 4 6-11z" fill="#bb8478"/><path d="M22 36q8 4 6 10l-10 11" fill="none" stroke="#2c2020" stroke-width="3"/><path d="M37 40l6 18h-9z" fill="#8c7355"/></svg></div>
    <div class="app"><svg viewBox="0 0 64 64"><circle cx="32" cy="32" r="26" fill="url(#gEarth)"/><path d="M14 13q10-8 22-6l-4 6-5 3 6 3-4 5-6 6 4 3 7 2-5 1q-8-3-10-9-4-6-5-14zM31 35q8-1 15 7 0 5-5 8-4 4-4 8-4-4-4-10-5-7-2-13zM48 11q8 7 10 18-6-3-8-10z" fill="#e9f6fe"/></svg></div>
    <div class="app"><svg viewBox="0 0 64 64"><rect x="2" y="15" width="60" height="34" fill="#1f2022"/><path d="M2 15h60v6H2z" fill="#35373a"/><path d="M2 21h8v28H2z" fill="#2a2c30"/><path d="M5 24v22" stroke="#a05a60" stroke-dasharray="2 2"/><path d="M20 23h4v5h-4zM30 23h4v5h-4zM39 23h4v5h-4z" fill="#ececec"/><use href="#finder" x="41" y="41" width="20" height="19"/></svg></div>
    <div class="app"><svg viewBox="0 0 64 64"><rect x="2" y="4" width="60" height="56" fill="#1d1e1f"/><path d="M2 4h60v6H2z" fill="#35373a"/><path d="M2 10h8v50H2z" fill="#2a2c30"/><path d="M30 13h5m4 0h4M13 22h12m17 0h5m-1 30h5" stroke="#e4e4e4" stroke-width="4.500" stroke-dasharray="5 3"/><path d="M13 13h14M30 22h6M13 32h5m13 0h5M13 42h14M13 52h5m4 0h5m4 0h8" stroke="#4f5459" stroke-width="4" stroke-dasharray="5 3"/><path d="M22 32h5m13 0h5m-14 20h4" stroke="#5c86ad" stroke-width="4"/><path d="M32 42h4v5h-4z" fill="#e4e4e4"/><path d="M5 22v24" stroke="#b08040" stroke-dasharray="2 2"/><use href="#finder" x="41" y="41" width="20" height="19"/></svg></div>
    <div class="app"><svg viewBox="0 0 64 64"><rect x="2" y="14" width="60" height="36" fill="#1b1b1c"/><path d="M2 14h60v3H2z" fill="#555"/><path d="M2 17h8v33H2z" fill="#303133"/><path d="M32 31h9" stroke="#444" stroke-width="2"/><use href="#photos" x="40" y="40" width="21" height="21"/></svg></div>
    <div class="app"><svg viewBox="0 0 64 64"><rect x="2" y="15" width="60" height="34" fill="#1f2022"/><path d="M2 15h60v6H2z" fill="#35373a"/><path d="M2 21h8v28H2z" fill="#2a2c30"/><path d="M5 24v22" stroke="#a05a60" stroke-dasharray="2 2"/><path d="M13 25.500h40" stroke="#ececec" stroke-width="5" stroke-dasharray="5 3.500"/><path d="M13 35.500h14" stroke="#ececec" stroke-width="5" stroke-dasharray="5 3.500"/><use href="#finder" x="41" y="41" width="20" height="19"/></svg></div>
    <div class="app"><svg viewBox="0 0 64 64"><rect x="2" y="14" width="60" height="35" fill="#141516"/><path d="M10 21h19M10 26h19M10 31h13" stroke="#dfe8e2" stroke-width="4" stroke-dasharray="6 1"/><path d="M17 19.500h12m-12 5h12" stroke="#24a95a" stroke-width="1.500"/><path d="M36 18h24v13H36z" fill="#f1eef2"/><path d="M39 24h6v6h-6z" fill="#c8a7d0"/><path d="M2 37h60v6H2z" fill="#d3d3d3"/><path d="M2 44h60v4H2z" fill="#129344"/><path d="M30 34v11" stroke="#111"/><use href="#imovie" x="39" y="39" width="24" height="24"/></svg></div>
    <div class="app"><svg viewBox="0 0 64 64"><rect x="2" y="15" width="60" height="34" fill="#26272a"/><path d="M18 21.500h28M18 28h28M18 37h18" stroke="#a5a7b6" stroke-width="4" stroke-dasharray="3.500 1.300"/><use href="#safari" x="40" y="40" width="21" height="21"/></svg></div>
    <div class="app"><svg viewBox="0 0 64 64"><rect x="2" y="12" width="60" height="40" fill="#1e1e20"/><path d="M2 12h60v4H2z" fill="#3b3b3e"/><path d="M18 18v32" stroke="#55565a" stroke-width="8" stroke-dasharray="1 1.500"/><path d="M13 36.500h49" stroke="#174f9e" stroke-width="2"/><path d="M4 18v18" stroke="#b0406c" stroke-width="2" stroke-dasharray="1.500 2"/><use href="#music" x="40" y="40" width="21" height="21"/></svg></div>
    <div class="app"><svg viewBox="0 0 64 64"><rect x="2" y="4" width="60" height="56" fill="#1d1e1f"/><path d="M2 4h60v6H2z" fill="#35373a"/><path d="M2 10h8v50H2z" fill="#2a2c30"/><path d="M13 11h4m31 0h5" stroke="#ddd" stroke-width="3"/><path d="M13 19.500h40M13 29.500h30" stroke="#c9cdd2" stroke-width="5" stroke-dasharray="4 4.500"/><path d="M5 22v24" stroke="#b08040" stroke-dasharray="2 2"/><use href="#finder" x="41" y="41" width="20" height="19"/></svg></div>
    <div class="app"><svg viewBox="0 0 64 64"><path d="M13 11l4-8 8 2 6-4 7 4 8-1 6 8-8 5H18z" fill="#e8eaeb"/><path d="M20 8l6 6 5-8 5 9 8-9" fill="none" stroke="#525b66" stroke-width="2"/><path d="M22 12l4-5 3 5z" fill="#3c8a70"/><path d="M39 12l3-5 3 5z" fill="#d05834"/><path d="M9 8q23 14 46 0l-6 48q-17 9-34 0z" fill="url(#gTrash)" opacity=".93"/><path d="M9 8q23 14 46 0" fill="none" stroke="#aeb3b5" stroke-width="1.500"/></svg></div>
  </div>
</footer>
</body>
</html>
```
FILE: styles.css
```css
* { box-sizing: border-box; }
body { margin: 0; width: 2880px; height: 1800px; overflow: hidden; display: flex; flex-direction: column; background: #02060f; font-family: Inter, "Liberation Sans", sans-serif; color: #fff; }
svg { flex: none; display: block; }
.defs { position: absolute; }
i { font-style: normal; }

/* Menu bar */
.menubar { height: 44px; flex: none; display: flex; align-items: center; background: linear-gradient(90deg, #1c2845, #1a2239 50%, #161b2c); font-size: 28px; line-height: 44px; white-space: nowrap; }
.apple { margin: 0 0 4px 38.5px; fill: #fff; }
.menus { display: grid; margin-left: 37.500px; letter-spacing: -.3px; grid-template-columns: 146px 82px 86px 100px 129px 181px 134px 84px 139px 80px; }
.menus b { font-weight: 700; letter-spacing: -.8px; }
.status { margin-left: auto; display: flex; align-items: center; padding-right: 46px; }
.s-acc { margin-right: 35px; }
.s-bt { margin-right: 29px; }
.s-wifi { margin-right: 22px; }
.s-pct { width: 60px; font-size: 25px; letter-spacing: -.8px; }
.s-time { width: 133px; margin-left: 37px; letter-spacing: -.3px; }
.s-search { margin-left: 42px; }
.s-siri { margin: 0 24px 0 34px; }

/* Browser frame */
.window { height: 1644px; margin-top: 2px; flex: none; display: flex; flex-direction: column; border-radius: 10px; overflow: hidden; box-shadow: 0 -1px 0 #000; }
.chrome { height: 222px; flex: none; border: 2px solid #5d5e60; border-top-color: #6b6c6c; border-bottom-color: #292528; border-radius: 10px 10px 0 0; background: #35363a; overflow: hidden; }
.tabstrip { height: 82px; display: flex; align-items: center; background: #202124; font-size: 24px; padding-left: 24px; letter-spacing: -.1px; }
.lights { display: flex; gap: 16px; width: 130px; }
.lights i { width: 24px; height: 24px; border-radius: 50%; }
.red { background: #ff5c55; }
.yellow { background: #e6bf2c; }
.green { background: #53c22b; }
.tab { height: 68px; align-self: flex-end; width: 478px; padding: 0 22px 1px 26px; display: flex; align-items: center; color: #bdc1c6; }
.tab > svg:first-child { fill: #54565a; margin-right: 18px; }
.tab .x { margin-left: auto; }
.tab.active { position: relative; width: 480px; padding-right: 24px; background: #35363a; border-radius: 16px 16px 0 0; color: #fff; }
.tab.active > svg:first-child { fill: #f1f3f4; }
.tab.active::before, .tab.active::after { content: ""; position: absolute; bottom: 0; width: 16px; height: 16px; }
.tab.active::before { left: -16px; background: radial-gradient(circle at 0 0, transparent 15.500px, #35363a 16px); }
.tab.active::after { right: -16px; background: radial-gradient(circle at 100% 0, transparent 15.500px, #35363a 16px); }
.plus { margin: 13px 0 0 32px; }
.tabmenu { margin: 13px 28px 0 auto; }

.toolbar { height: 72px; display: flex; align-items: center; padding-left: 28px; }
.fwd { margin-left: 37px; }
.reload { margin-left: 36px; }
.omnibox { width: 2512px; height: 56px; margin-left: 29px; padding: 0 21px 0 22px; display: flex; align-items: center; border-radius: 28px; background: #202124; }
.url { width: 201px; margin-left: 17px; font-size: 28px; letter-spacing: 1px; white-space: nowrap; }
.url i { color: #8d8f93; }
.ibeam { margin: 12px 0 0 51px; }
.star { margin-left: auto; }
.avatar { width: 44px; height: 44px; margin-left: 22px; border-radius: 50%; background: #ab47bc; font-size: 24px; line-height: 44px; text-align: center; }
.dots { margin-left: 38px; }

.bookmarks { height: 55px; display: flex; align-items: center; padding-left: 29px; font-size: 24px; letter-spacing: -.1px; white-space: nowrap; }
.b1 { width: 110px; padding-left: 19px; }
.b2, .b3, .b4 { padding-left: 17px; }
.b2 { width: 147px; }
.b3 { width: 111px; }
.reading { margin-left: auto; height: 32px; padding: 0 28px 0 22px; display: flex; align-items: center; gap: 18px; border-left: 2px solid #606164; }

/* Web page */
.page { flex: 1; padding-top: 6px; background: linear-gradient(#f5f5f5 97%, #ebebeb); color: #2f4f4f; font-family: "Liberation Sans", Arial, sans-serif; }
h1 { margin: 0 0 0 25px; font: 400 159px/186px "DejaVu Sans", sans-serif; letter-spacing: -4px; font-kerning: none; color: #bdb76b; -webkit-text-stroke: 1.500px #bdb76b; }
h1::first-letter { letter-spacing: 1px; }
.user { padding-left: 15.500px; font: 700 40px/46px "Liberation Serif", "Times New Roman", serif; }
.logout { color: #551a8b; }
.panel { height: 970px; margin: 24px 0 0 226px; padding-top: 26px; display: flex; flex-direction: column; background: #ffedd4; font-size: 40px; line-height: 46px; }
.entry { width: 1830px; height: 138px; margin-left: 268px; border: 2px solid #bfbfbf; border-radius: 20px; background: #f5f5f5; }
.add { width: 666px; height: 80px; margin: 54px 0 0 748px; padding: 0 2px 4px 0; border: 2px solid #bfbfbf; background: #808080; color: #000; font: 26.670px "Liberation Sans", Arial, sans-serif; }
.tasks { display: flex; flex-direction: column; gap: 107px; margin: 79px 0 0 188px; }
.task { display: flex; gap: 386px; white-space: nowrap; }
.actions { display: flex; gap: 386px; margin: 109px 0 0 188px; }
.pill { width: 328px; height: 80px; padding: 7px 0 0; border: 2px solid #bfbfbf; border-radius: 40px; text-align: center; }
.update { background: #7ca17c; }
.delete { background: #ff3333; }

/* Dock */
.desktop { flex: 1; display: flex; padding: 24px 50px 0; background: linear-gradient(90deg, #030914, #02060f 20%, #02060f 80%, #041020); }
.dock { width: 2780px; height: 86px; padding: 6px 0 0 4.200px; display: flex; border: 2px solid #3c424d; border-bottom: 0; border-radius: 12px 12px 0 0; background: #151c2b; }
.app { position: relative; width: 67.700px; flex: none; display: flex; flex-direction: column; align-items: center; gap: 2px; }
.app > svg { width: 64px; height: 64px; overflow: visible; }
.run::after { content: ""; width: 8px; height: 8px; border-radius: 50%; background: #989eae; }
.badge { position: absolute; top: 0; right: -5px; width: 25px; height: 25px; border-radius: 50%; background: #f63d37; font: 400 13px/25px Inter, sans-serif; text-align: center; }
.divider { width: 2px; height: 62px; margin: 4px 14.400px 0 14px; flex: none; background: #4d5361; }
.mono { font-family: "DejaVu Sans Mono", monospace; }
.hand { font-style: italic; }
```
